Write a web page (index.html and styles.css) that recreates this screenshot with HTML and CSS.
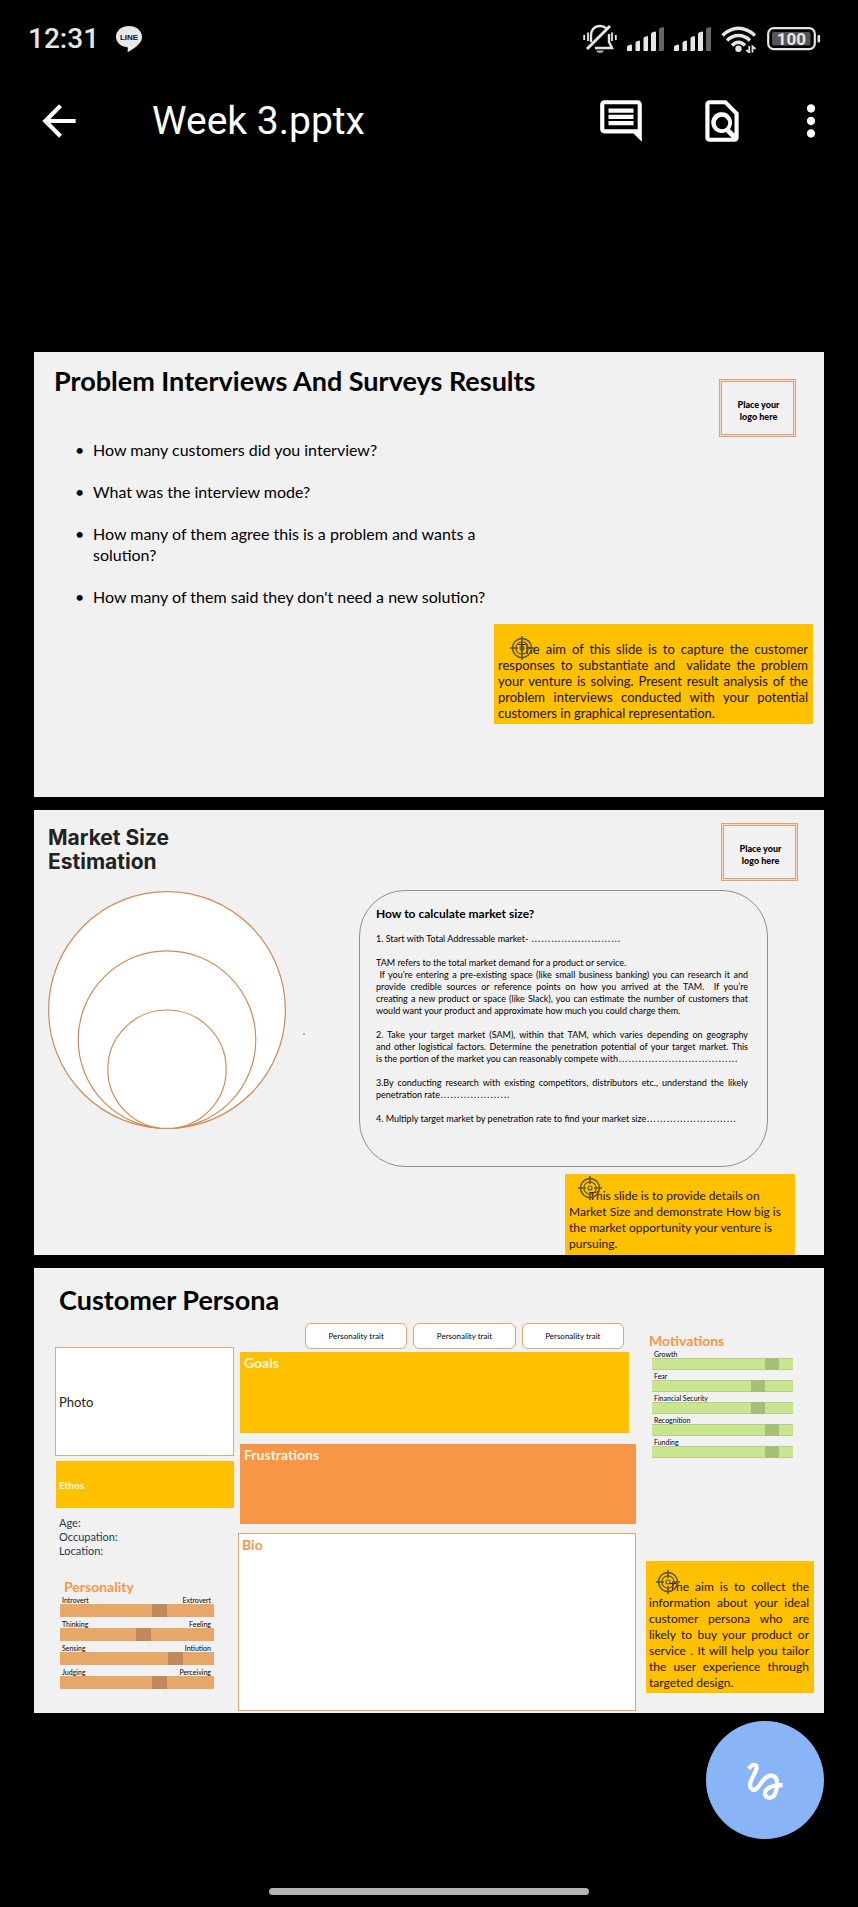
FILE: index.html
```html
<!DOCTYPE html>
<html lang="en">
<head>
<meta charset="utf-8">
<meta name="viewport" content="width=device-width, initial-scale=1">
<title>Week 3.pptx</title>
<link rel="stylesheet" href="styles.css">
</head>
<body>
<svg class="defs" aria-hidden="true">
  <symbol id="target" viewBox="0 0 24 24">
    <g fill="none" stroke="#5d5636" stroke-width="1.6">
      <circle cx="12" cy="12" r="9.5"/>
      <circle cx="12" cy="12" r="6.2" stroke-width="1.2"/>
      <circle cx="12" cy="12" r="2" stroke-width="1.2"/>
      <path d="M12 0v8M12 16v8M0 12h8M16 12h8"/>
    </g>
  </symbol>
  <symbol id="signal" viewBox="0 0 37 24">
    <path fill="#e6e6e6" d="M0 24v-4q0-1 1-1.500l3-1q1 0 1 1v4.500q0 1-1 1zM8.500 24V16q0-1 1-1.500l2.500-1q1 0 1 1V23q0 1-1 1zM16.500 24V11.500q0-1 1-1.500l2.500-1q1 0 1 1V23q0 1-1 1zM24 24V7q0-1 1-1.500l3-1q1 0 1 1V23q0 1-1 1z"/>
    <path fill="#666" d="M32 24V2.500q0-1 1-1.500l3-1q1 0 1 1V23q0 1-1 1z"/>
  </symbol>
</svg>

<header>
  <div class="status">
    <time class="clock">12:31</time>
    <svg class="line-badge" viewBox="0 0 26 26" role="img" aria-label="LINE">
      <path fill="#e8e8e8" d="M13 0C5.800 0 0 4.700 0 10.700c0 5.300 4.500 9.600 10.800 10.400 1 .2 1.100.8 1 1.900l-.3 2.200c0 .6.400.8 1 .5 3.400-1.800 8.600-5.300 11.400-8.900 1.400-1.800 2.100-3.900 2.100-6.100C26 4.700 20.200 0 13 0z"/>
      <text x="13" y="13.500" text-anchor="middle">LINE</text>
    </svg>
    <div class="status-icons">
      <svg width="34" height="30" viewBox="0 0 34 30" fill="none" stroke="#e6e6e6" stroke-width="2.400" aria-hidden="true">
        <path d="M8 18V11c0-5 3.500-9 9-9 3 0 5 1 6.500 2.500M26 10v8l3 6H12"/>
        <path d="M4 25 27 2" stroke-width="3"/>
        <path d="M1.200 11v5M5 8.500V17M29 8.500V17M32.800 11v5" stroke-width="1.800"/>
        <path d="M13 26.500h8q-1 2.500-4 2.500t-4-2.500z" fill="#aaa" stroke="none"/>
      </svg>
      <svg class="bars" aria-hidden="true"><use href="#signal"/></svg>
      <svg class="bars" aria-hidden="true"><use href="#signal"/></svg>
      <svg width="36" height="27" viewBox="0 0 36 27" fill="none" stroke="#e6e6e6" stroke-width="3.400" aria-hidden="true">
        <path d="M1.500 9.500Q9 2.300 17.500 2.300T34 9.500M6 14.500q5-5 11.500-5t11.500 5M11 19.500q3-3.300 6.500-3.300t6.500 3.300"/>
        <circle cx="17.500" cy="22.800" r="3.200" fill="#e6e6e6" stroke="none"/>
        <path d="M28.300 20v6.500l-3-2.500M31.500 26.500V20.500l3 2.500" stroke-width="1.800"/>
      </svg>
      <svg class="battery" width="54" height="24" viewBox="0 0 54 24" role="img" aria-label="Battery 100">
        <rect x="1.200" y="1.200" width="46.600" height="21" rx="5.500" fill="none" stroke="#e6e6e6" stroke-width="2.200"/>
        <rect x="5" y="5" width="38.500" height="13.500" rx="2" fill="#555"/>
        <rect x="50.500" y="8" width="2.600" height="7.500" rx="1" fill="#e6e6e6"/>
        <text x="24.500" y="18" text-anchor="middle">100</text>
      </svg>
    </div>
  </div>

  <div class="appbar">
    <button class="icon-btn" aria-label="Back"><svg viewBox="0 0 24 24"><path d="M20 11H7.830l5.590-5.590L12 4l-8 8 8 8 1.410-1.410L7.830 13H20v-2z"/></svg></button>
    <h1>Week 3.pptx</h1>
    <button class="icon-btn" aria-label="Comments"><svg viewBox="0 0 24 24"><path d="M21.990 4c0-1.100-.89-2-1.990-2H4c-1.100 0-2 .9-2 2v12c0 1.100.9 2 2 2h14l4 4-.01-18zM20 4v12H4V4h16zM6 12h12v2H6zm0-3h12v2H6zm0-3h12v2H6z"/></svg></button>
    <button class="icon-btn find" aria-label="Find in file"><svg viewBox="0 0 24 24"><path fill-rule="evenodd" d="M6 2h8l6 6v12c0 1.100-.9 2-2 2H6c-1.100 0-2-.9-2-2V4c0-1.100.9-2 2-2zm0 2v16h10.600l-2.700-2.700a5 5 0 1 1 1.900-1.500L18 18V8.800L13.200 4zm6 6a3 3 0 1 0 0 6 3 3 0 0 0 0-6z"/></svg></button>
    <button class="icon-btn" aria-label="More options"><svg viewBox="0 0 24 24"><path d="M12 8c1.100 0 2-.9 2-2s-.9-2-2-2-2 .9-2 2 .9 2 2 2zm0 2c-1.100 0-2 .9-2 2s.9 2 2 2 2-.9 2-2-.9-2-2-2zm0 6c-1.100 0-2 .9-2 2s.9 2 2 2 2-.9 2-2-.9-2-2-2z"/></svg></button>
  </div>
</header>

<main>
  <section class="slide slide-survey">
    <div class="survey-head">
      <h2>Problem Interviews And Surveys Results</h2>
      <div class="logo-box">Place your<br>logo here</div>
    </div>
    <ul class="questions">
      <li>How many customers did you interview?</li>
      <li>What was the interview mode?</li>
      <li>How many of them agree this is a problem and wants a solution?</li>
      <li>How many of them said they don't need a new solution?</li>
    </ul>
    <aside class="note note-survey">
      <svg class="target" aria-hidden="true"><use href="#target"/></svg>
      <p>The aim of this slide is to capture the customer responses to substantiate and&nbsp; validate the problem your venture is solving. Present result analysis of the problem interviews conducted with your potential customers in graphical representation.</p>
    </aside>
  </section>

  <section class="slide slide-market">
    <div class="market-left">
      <h2 class="market-title">Market Size<br>Estimation</h2>
      <svg class="circles" viewBox="0 0 238 238" aria-hidden="true">
        <g fill="#fff" stroke="#d08b56" stroke-width="1.200">
          <circle cx="119" cy="119" r="118.400"/>
          <circle cx="119" cy="148.600" r="88.800"/>
          <circle cx="119" cy="178.200" r="59.200"/>
        </g>
      </svg>
    </div>
    <span class="dot"></span>
    <div class="market-right">
      <div class="logo-box">Place your<br>logo here</div>
      <div class="panel">
        <h3>How to calculate market size?</h3>
        <p>1. Start with Total Addressable market- <span class="dots">………………………</span></p>
        <p>TAM refers to the total market demand for a product or service.
          <span class="full">&nbsp;If you’re entering a pre-existing space (like small business banking) you can research it and</span>
          <span class="full">provide credible sources or reference points on how you arrived at the TAM.&nbsp; If you’re</span>
          <span class="full">creating a new product or space (like Slack), you can estimate the number of customers that</span>
          would want your product and approximate how much you could charge them.</p>
        <p><span class="full">2. Take your target market (SAM), within that TAM, which varies depending on geography</span>
          <span class="full">and other logistical factors. Determine the penetration potential of your target market. This</span>
          is the portion of the market you can reasonably compete with<span class="dots">………………………………</span></p>
        <p><span class="full">3.By conducting research with existing competitors, distributors etc., understand the likely</span>
          penetration rate<span class="dots">…………………</span></p>
        <p>4. Multiply target market by penetration rate to find your market size<span class="dots">………………………</span></p>
      </div>
      <aside class="note note-market">
        <svg class="target" aria-hidden="true"><use href="#target"/></svg>
        <p>This slide is to provide details on Market Size and demonstrate How big is the market opportunity your venture is pursuing.</p>
      </aside>
    </div>
  </section>

  <section class="slide slide-persona">
    <h2>Customer Persona</h2>
    <div class="persona-grid">
      <div class="profile">
        <div class="photo">Photo</div>
        <div class="ethos">Ethos</div>
        <div class="facts">Age:<br>Occupation:<br>Location:</div>
        <div class="scales personality">
          <h3>Personality</h3>
          <div class="scale"><label for="p1">Introvert</label><span>Extrovert</span><input id="p1" type="range" value="66"></div>
          <div class="scale"><label for="p2">Thinking</label><span>Feeling</span><input id="p2" type="range" value="55"></div>
          <div class="scale"><label for="p3">Sensing</label><span>Intiution</span><input id="p3" type="range" value="78"></div>
          <div class="scale"><label for="p4">Judging</label><span>Perceiving</span><input id="p4" type="range" value="66"></div>
        </div>
      </div>
      <div class="story">
        <div class="traits"><span>Personality trait</span><span>Personality trait</span><span>Personality trait</span></div>
        <div class="goals">Goals</div>
        <div class="frustrations">Frustrations</div>
        <div class="bio">Bio</div>
      </div>
      <div class="drivers">
        <div class="scales motivations">
          <h3>Motivations</h3>
          <div class="scale"><label for="m1">Growth</label><input id="m1" type="range" value="89"></div>
          <div class="scale"><label for="m2">Fear</label><input id="m2" type="range" value="78"></div>
          <div class="scale"><label for="m3">Financial Security</label><input id="m3" type="range" value="78"></div>
          <div class="scale"><label for="m4">Recognition</label><input id="m4" type="range" value="89"></div>
          <div class="scale"><label for="m5">Funding</label><input id="m5" type="range" value="89"></div>
        </div>
        <aside class="note note-persona">
          <svg class="target" aria-hidden="true"><use href="#target"/></svg>
          <p>The aim is to collect the information about your ideal customer persona who are likely to buy your product or service . It will help you tailor the user experience through targeted design.</p>
        </aside>
      </div>
    </div>
  </section>
</main>

<footer>
  <button class="fab" aria-label="Annotate">
    <svg viewBox="440 655 116 126"><path d="M448 682C456 670 464 667 470 672 480 682 452 714 452 730 452 744 462 751 471 744 484 734 492 706 514 703 532 701 538 716 534 742 530 764 520 772 510 771 498 770 494 757 502 747 512 734 532 732 552 732"/></svg>
  </button>
  <div class="home-bar"></div>
</footer>
</body>
</html>
```
FILE: styles.css
```css
* { box-sizing: border-box; margin: 0; padding: 0; }
body { background: #000; color: #000; font-family: Lato, "Open Sans", sans-serif; }
button { border: 0; background: none; cursor: pointer; }
.defs { display: none; }

/* Status bar */
.status { display: flex; align-items: center; height: 78px; padding: 0 37px 0 28px; color: #e6e6e6; }
.clock { font: 500 28px/32px Roboto, sans-serif; }
.line-badge { width: 26px; height: 26px; margin-left: 17px; }
.line-badge text { font: 900 8px "Liberation Sans", sans-serif; fill: #111; }
.status-icons { display: flex; align-items: center; gap: 10px; margin-left: auto; }
.bars { width: 37px; height: 24px; }
.battery text { font: 700 17px Roboto, sans-serif; fill: #e6e6e6; }

/* App bar */
.appbar { display: flex; align-items: center; height: 86px; padding: 0 22px 0 34px; color: #fff; }
.appbar h1 { flex: 1; margin-left: 68px; font: 400 39px/48px Roboto, sans-serif; }
.icon-btn { width: 50px; height: 50px; }
.icon-btn svg { display: block; width: 50px; height: 50px; fill: #fff; }
.icon-btn.find { margin: 0 39px 0 51px; }

/* Slides */
main { display: flex; flex-direction: column; gap: 13px; padding: 188px 34px 0; }
.slide { min-height: 445px; background: #f1f1f1; }
.slide h2 { font-size: 27px; line-height: 30px; font-weight: 700; }
.logo-box {
  display: grid; place-content: center; width: 77px; height: 58px; padding: 6px 0 0 2px;
  border: 3px double #d9a27c;
  background: linear-gradient(#f1f1f1, #f1f1f1) padding-box, #f3d9c6 border-box;
  text-align: center; font-size: 9px; line-height: 12px; font-weight: 900;
}
.note { position: relative; background: #ffc000; color: #1c1400; font-size: 13px; line-height: 16px; }
.target { position: absolute; width: 24px; height: 24px; }
.note p { text-indent: 20px; text-align: justify; }

.slide-survey { display: flex; flex-direction: column; padding: 14px 11px 0 20px; }
.survey-head { display: flex; justify-content: space-between; padding-right: 17px; }
.survey-head .logo-box { margin-top: 13px; }
.questions { display: grid; gap: 21px; width: 450px; margin: 2px 0 17px; padding-left: 39px; list-style: none; font-size: 16px; line-height: 21px; }
.questions li { position: relative; }
.questions li::before { content: "•"; position: absolute; left: -18px; }
.note-survey { align-self: flex-end; width: 319px; padding: 17px 5px 3px 4px; }
.note-survey .target { left: 16px; top: 12px; }

.slide-market { display: flex; padding: 0 26px 0 14px; }
.market-left { flex: none; width: 238px; padding-top: 16px; }
.slide .market-title { font: 700 21px/24px Inter, sans-serif; color: #222; }
.circles { display: block; width: 100%; margin-top: 17px; }
.dot { flex: none; width: 2px; height: 2px; margin: 223px 0 0 17px; background: #b5b5b5; }
.market-right { flex: 1; display: flex; flex-direction: column; margin-left: 54px; padding-top: 13px; }
.market-right .logo-box { align-self: flex-end; }
.panel { height: 277px; margin: 9px 30px 7px 0; padding: 15px 19px 0 16px; border: 1px solid #8f8f8f; border-radius: 46px; font-size: 9px; line-height: 12px; }
.panel h3 { font-size: 12px; line-height: 16px; margin-bottom: 11px; }
.panel p { margin-bottom: 12px; white-space: nowrap; }
.full { display: block; text-align: justify; text-align-last: justify; white-space: normal; }
.dots { font: 10px/10px "Liberation Sans", sans-serif; }
.note-market { align-self: flex-end; width: 230px; height: 81px; margin-right: 3px; padding: 14px 4px 3px 4px; font-size: 12px; }
.note-market p { text-align: left; }
.note-market .target { left: 13px; top: 2px; }

/* Persona slide */
.slide-persona { padding: 17px 10px 1px 21px; }
.slide-persona h2 { margin-bottom: 8px; padding-left: 4px; }
.persona-grid { display: grid; grid-template-columns: 179px 1fr 168px; }
.profile { padding-top: 24px; }
.photo { display: flex; align-items: center; height: 109px; padding-left: 3px; border: 1px solid #eaa56f; background: #fff; color: #222; font-size: 13px; }
.ethos { display: flex; align-items: center; height: 47px; margin: 5px 0 8px 1px; padding-left: 3px; background: #ffc000; color: #fff6d8; font-size: 10px; font-weight: 900; }
.facts { padding-left: 4px; color: #1f3b54; font-size: 11px; line-height: 14px; }
.scales h3 { font-size: 14px; line-height: 18px; color: #f79646; }
.scale { display: grid; grid-template-columns: 1fr auto; font-size: 7px; line-height: 8px; }
.scale input { grid-column: 1 / -1; appearance: none; width: 100%; }
.scale input::-webkit-slider-thumb { appearance: none; }
.personality { width: 154px; margin: 20px 0 0 5px; }
.personality h3 { padding-left: 4px; }
.personality .scale { margin-bottom: 3px; }
.personality label { padding-left: 2px; }
.personality span { padding-right: 3px; }
.personality input { height: 13px; background: #e6a769; }
.personality input::-webkit-slider-thumb { width: 15px; height: 13px; background: #bf8b58; }

.story { display: flex; flex-direction: column; margin: 0 10px 0 4px; }
.traits { display: flex; gap: 6px; padding: 0 12px 0 67px; }
.traits span { flex: 1; height: 26px; border: 1px solid #e6a26e; border-radius: 6px; background: #fff; text-align: center; font-size: 8px; line-height: 25px; }
.goals, .frustrations, .bio { padding: 2px 4px; font-size: 14px; line-height: 18px; font-weight: 700; }
.goals { height: 81px; margin: 3px 7px 11px 2px; background: #ffc000; color: #fff6d8; }
.frustrations { height: 80px; margin: 0 0 9px 2px; background: #f79646; color: #fff1e0; }
.bio { height: 178px; padding-left: 3px; border: 1px solid #eaa56f; background: #fff; color: #f79646; }

.drivers { display: flex; flex-direction: column; padding-top: 9px; }
.motivations { width: 141px; margin-left: 6px; }
.motivations h3 { margin-left: -3px; }
.motivations .scale { margin-bottom: 2px; }
.motivations label { padding-left: 2px; }
.motivations input { height: 12px; background: #c9e58f; border: 1px solid #b5cf86; border-width: 1px 0; }
.motivations input::-webkit-slider-thumb { width: 14px; height: 12px; background: #a6bf78; }
.note-persona { margin: auto 0 18px; padding: 18px 5px 2px 3px; font-size: 12px; }
.note-persona .target { left: 10px; top: 9px; }

/* Bottom controls */
footer { display: flex; flex-direction: column; align-items: center; padding: 8px 34px 12px; }
.fab { display: grid; place-items: center; align-self: flex-end; width: 118px; height: 118px; border-radius: 50%; background: #8ab4f8; }
.fab svg { width: 38px; height: 41px; fill: none; stroke: #fff; stroke-width: 13; }
.home-bar { width: 320px; height: 7px; margin-top: 49px; border-radius: 4px; background: #b3b3b3; }
```
